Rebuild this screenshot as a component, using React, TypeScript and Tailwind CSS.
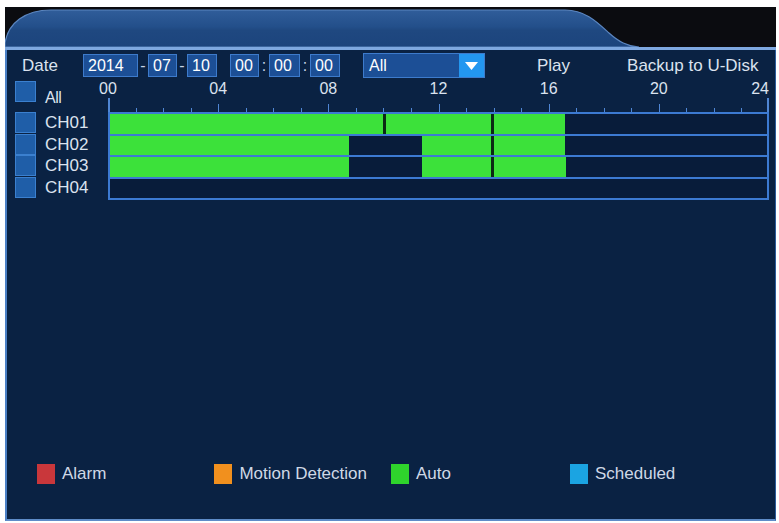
import React from 'react';

type Seg = [number, number];

const channels: { name: string; segs: Seg[]; cuts: number[] }[] = [
  { name: 'CH01', segs: [[0, 16.62]], cuts: [9.98, 13.92] },
  { name: 'CH02', segs: [[0, 8.74], [11.4, 16.62]], cuts: [13.92] },
  { name: 'CH03', segs: [[0, 8.74], [11.4, 16.66]], cuts: [13.92] },
  { name: 'CH04', segs: [], cuts: [] },
];

const hours = [0, 4, 8, 12, 16, 20, 24];

const legend = [
  { label: 'Alarm', color: 'bg-[#c9373b]', ml: 'ml-[30px]' },
  { label: 'Motion Detection', color: 'bg-[#f1901e]', ml: 'ml-[108px]' },
  { label: 'Auto', color: 'bg-[#2fd42c]', ml: 'ml-[24px]' },
  { label: 'Scheduled', color: 'bg-[#1ba4e2]', ml: 'ml-[119px]' },
];

const pct = (h: number) => `${(h / 24) * 100}%`;

function Field({ value, w }: { value: string; w: string }) {
  return (
    <div
      className={`${w} h-[23px] flex items-center pl-[4px] bg-[#1c4f96] border border-[#3d7bcc] text-[16px] text-white leading-none`}
    >
      {value}
    </div>
  );
}

function Sep({ ch }: { ch: string }) {
  return <span className="w-[10px] text-center text-[16px] text-[#c7d3e6]">{ch}</span>;
}

function Check() {
  return <div className="w-[21px] h-[21px] bg-[#1f5ea8] border border-[#3b80cf]" />;
}

export default function App() {
  return (
    <div
      className="w-[779px] h-[523px] bg-white pt-[7px] pl-[5px] overflow-hidden"
      style={{ fontFamily: '"Liberation Sans", Arial, sans-serif' }}
    >
      <div className="w-[771px] h-[514px] flex flex-col">
        {/* header with tab */}
        <div className="h-[40px] bg-[#0b0c10] shrink-0">
          <svg width="771" height="40" viewBox="0 0 771 40">
            <defs>
              <linearGradient id="tab" x1="0" y1="0" x2="0" y2="1">
                <stop offset="0" stopColor="#305d9a" />
                <stop offset="0.45" stopColor="#234f8a" />
                <stop offset="0.55" stopColor="#1f4880" />
                <stop offset="1" stopColor="#1c447d" />
              </linearGradient>
            </defs>
            <path
              d="M0 40 L0 36 C3 16 20 3 46 3 L560 3 C580 3 592 15 604 26 C614 35 622 39 634 40 Z"
              fill="url(#tab)"
              stroke="#5b86c0"
              strokeWidth="1.2"
            />
          </svg>
        </div>
        <div className="h-[3px] bg-[#7ea8e0] shrink-0" />

        {/* main panel */}
        <div className="flex-1 flex flex-col bg-[#0a2243] border-l-2 border-r border-b-2 border-l-[#4b80c6] border-r-[#2c5c9c] border-b-[#5e8cc8] text-[#dbe3ef]">
          {/* top controls */}
          <div className="h-[25px] mt-[3px] flex items-center">
            <span className="ml-[15px] w-[61px] text-[17px]">Date</span>
            <Field value="2014" w="w-[55px]" />
            <Sep ch="-" />
            <Field value="07" w="w-[29px]" />
            <Sep ch="-" />
            <Field value="10" w="w-[30px]" />
            <span className="w-[13px]" />
            <Field value="00" w="w-[29px]" />
            <Sep ch=":" />
            <Field value="00" w="w-[31px]" />
            <Sep ch=":" />
            <Field value="00" w="w-[30px]" />
            <div className="ml-[23px] w-[122px] h-[25px] flex bg-[#1c4f96] border border-[#3d7bcc]">
              <span className="flex-1 pl-[5px] text-[16px] text-white leading-[23px]">All</span>
              <span className="w-[25px] h-full bg-[#2397f0] flex items-center justify-center">
                <svg width="13" height="8" viewBox="0 0 13 8">
                  <path d="M0 0 H13 L6.5 8 Z" fill="#ffffff" />
                </svg>
              </span>
            </div>
            <span className="ml-[52px] text-[17px]">Play</span>
            <span className="ml-[57px] text-[17px]">Backup to U-Disk</span>
          </div>

          {/* ruler row */}
          <div className="h-[32px] mt-[2px] flex">
            <div className="w-[101px] flex items-start pt-[1px]">
              <div className="ml-[8px]">
                <Check />
              </div>
              <span className="ml-[9px] mt-[5px] text-[16px] tracking-[-0.5px]">All</span>
            </div>
            <div className="relative w-[661px]">
              {hours.map((h) => (
                <span
                  key={h}
                  className="absolute top-[1px] text-[16px] leading-none"
                  style={{
                    left: pct(h),
                    transform: h === 24 ? 'translateX(-100%)' : 'translateX(-50%)',
                  }}
                >
                  {String(h).padStart(2, '0')}
                </span>
              ))}
              {Array.from({ length: 25 }, (_, i) => (
                <span
                  key={i}
                  className={`absolute bottom-0 w-[1px] bg-[#4f86d4] ${
                    i === 0 || i === 24 ? 'h-[14px] w-[2px]' : i % 4 === 0 ? 'h-[8px]' : 'h-[4px]'
                  }`}
                  style={{ left: pct(i), transform: i === 24 ? 'translateX(-100%)' : undefined }}
                />
              ))}
            </div>
          </div>

          {/* channel rows */}
          <div className="flex">
            <div className="w-[101px] flex flex-col">
              {channels.map((c) => (
                <div key={c.name} className="h-[21.5px] flex items-center">
                  <div className="ml-[8px]">
                    <Check />
                  </div>
                  <span className="ml-[9px] text-[17px] leading-none">{c.name}</span>
                </div>
              ))}
            </div>
            <div className="w-[661px] border-2 border-t-0 border-[#3c7ad2]">
              {channels.map((c) => (
                <div key={c.name} className="relative h-[21.5px] border-t-2 border-[#3c7ad2] bg-[#081c3a]">
                  {c.segs.map(([a, b], i) => (
                    <div
                      key={i}
                      className="absolute top-0 bottom-0 bg-[#3ce13a]"
                      style={{ left: pct(a), width: pct(b - a) }}
                    />
                  ))}
                  {c.cuts.map((h, i) => (
                    <div
                      key={i}
                      className="absolute top-0 bottom-0 w-[3px] bg-[#0b2a14]"
                      style={{ left: pct(h) }}
                    />
                  ))}
                </div>
              ))}
            </div>
          </div>

          <div className="flex-1" />

          {/* legend */}
          <div className="h-[22px] mb-[34px] flex items-center">
            {legend.map((l) => (
              <div key={l.label} className={`${l.ml} flex items-center`}>
                <span className={`w-[18px] h-[20px] ${l.color}`} />
                <span className="ml-[7px] text-[17px] text-[#cfd8e6]">{l.label}</span>
              </div>
            ))}
          </div>
        </div>
      </div>
    </div>
  );
}
